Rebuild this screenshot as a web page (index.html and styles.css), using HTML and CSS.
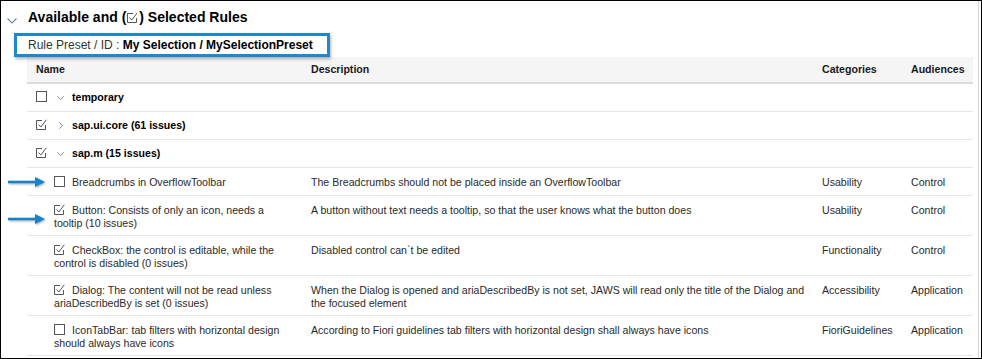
FILE: index.html
```html
<!DOCTYPE html>
<html lang="en">
<head>
    <meta charset="UTF-8">
    <meta name="viewport" content="width=device-width, initial-scale=1.0">
    <title>Available and Selected Rules</title>
    <link rel="stylesheet" href="styles.css">
</head>
<body>
    <div class="frame">
        <div class="panel">
            <div class="panel-title">
                <svg class="toggle" viewBox="0 0 10 6"><path d="M0.5 0.5L5 5L9.5 0.5" fill="none" stroke="#6a84a0" stroke-width="1.1"/></svg>
                <h2>Available and (<svg class="title-check" viewBox="0 0 11 11"><path d="M6 1.5H0.5V10.5H9.5V6" fill="none" stroke="#555"/><path d="M2.5 5.5L4.8 8L10.3 0.8" fill="none" stroke="#555"/></svg>) Selected Rules</h2>
            </div>
            <div class="preset">Rule Preset / ID : <b>My Selection / MySelectionPreset</b></div>
            <table class="rules">
                <colgroup>
                    <col class="col-name">
                    <col class="col-desc">
                    <col class="col-cat">
                    <col class="col-aud">
                </colgroup>
                <thead>
                    <tr><th>Name</th><th>Description</th><th>Categories</th><th>Audiences</th></tr>
                </thead>
                <tbody>
                    <tr class="group">
                        <td><span class="box"></span><svg class="chev" viewBox="0 0 7 4"><path d="M0.3 0.3L3.5 3.5L6.7 0.3" fill="none" stroke="#7d92a8"/></svg>temporary</td>
                        <td></td><td></td><td></td>
                    </tr>
                    <tr class="group">
                        <td><svg class="check" viewBox="0 0 11 11"><path d="M6 1.5H0.5V10.5H9.5V6" fill="none" stroke="#555"/><path d="M2.5 5.5L4.8 8L10.3 0.8" fill="none" stroke="#555"/></svg><svg class="chev chev-right" viewBox="0 0 4 7"><path d="M0.3 0.3L3.5 3.5L0.3 6.7" fill="none" stroke="#7d92a8"/></svg>sap.ui.core (61 issues)</td>
                        <td></td><td></td><td></td>
                    </tr>
                    <tr class="group">
                        <td><svg class="check" viewBox="0 0 11 11"><path d="M6 1.5H0.5V10.5H9.5V6" fill="none" stroke="#555"/><path d="M2.5 5.5L4.8 8L10.3 0.8" fill="none" stroke="#555"/></svg><svg class="chev" viewBox="0 0 7 4"><path d="M0.3 0.3L3.5 3.5L6.7 0.3" fill="none" stroke="#7d92a8"/></svg>sap.m (15 issues)</td>
                        <td></td><td></td><td></td>
                    </tr>
                    <tr class="rule">
                        <td><span class="box"></span>Breadcrumbs in OverflowToolbar</td>
                        <td>The Breadcrumbs should not be placed inside an OverflowToolbar</td>
                        <td>Usability</td>
                        <td>Control</td>
                    </tr>
                    <tr class="rule">
                        <td><svg class="check" viewBox="0 0 11 11"><path d="M6 1.5H0.5V10.5H9.5V6" fill="none" stroke="#555"/><path d="M2.5 5.5L4.8 8L10.3 0.8" fill="none" stroke="#555"/></svg>Button: Consists of only an icon, needs a tooltip (10 issues)</td>
                        <td>A button without text needs a tooltip, so that the user knows what the button does</td>
                        <td>Usability</td>
                        <td>Control</td>
                    </tr>
                    <tr class="rule">
                        <td><svg class="check" viewBox="0 0 11 11"><path d="M6 1.5H0.5V10.5H9.5V6" fill="none" stroke="#555"/><path d="M2.5 5.5L4.8 8L10.3 0.8" fill="none" stroke="#555"/></svg>CheckBox: the control is editable, while the control is disabled (0 issues)</td>
                        <td>Disabled control can`t be edited</td>
                        <td>Functionality</td>
                        <td>Control</td>
                    </tr>
                    <tr class="rule">
                        <td><svg class="check" viewBox="0 0 11 11"><path d="M6 1.5H0.5V10.5H9.5V6" fill="none" stroke="#555"/><path d="M2.5 5.5L4.8 8L10.3 0.8" fill="none" stroke="#555"/></svg>Dialog: The content will not be read unless ariaDescribedBy is set (0 issues)</td>
                        <td>When the Dialog is opened and ariaDescribedBy is not set, JAWS will read only the title of the Dialog and the focused element</td>
                        <td>Accessibility</td>
                        <td>Application</td>
                    </tr>
                    <tr class="rule">
                        <td><span class="box"></span>IconTabBar: tab filters with horizontal design should always have icons</td>
                        <td>According to Fiori guidelines tab filters with horizontal design shall always have icons</td>
                        <td>FioriGuidelines</td>
                        <td>Application</td>
                    </tr>
                </tbody>
            </table>
        </div>
        <svg class="pointer pointer-a" viewBox="0 0 38 12"><path d="M0 6H29" stroke="#1583cc" stroke-width="2.5"/><path d="M27 1L37 6L27 11Z" fill="#1583cc"/></svg>
        <svg class="pointer pointer-b" viewBox="0 0 38 12"><path d="M0 6H29" stroke="#1583cc" stroke-width="2.5"/><path d="M27 1L37 6L27 11Z" fill="#1583cc"/></svg>
    </div>
</body>
</html>
```

FILE: styles.css
```css
body {
    margin: 0;
    font-family: "Liberation Sans", Arial, sans-serif;
    color: #333;
}
div.frame {
    position: relative;
    width: 982px;
    height: 359px;
    box-sizing: border-box;
    border: 1px solid #000;
    overflow: hidden;
    background-color: #fff;
}
div.panel {
    width: 978px;
    height: 100%;
    box-sizing: border-box;
    border-right: 1px solid #d6d6d6;
}
div.panel-title {
    display: flex;
    align-items: flex-start;
    padding: 8px 0 0 6px;
}
svg.toggle {
    width: 10px;
    height: 6px;
    margin: 9px 11px 0 0;
}
div.panel-title h2 {
    margin: 0;
    font-size: 14px;
    line-height: 16px;
    font-weight: bold;
    color: #000;
}
svg.title-check {
    width: 11px;
    height: 11px;
    margin: 0 1px;
    vertical-align: -1px;
}
div.preset {
    position: relative;
    z-index: 1;
    margin: 8px 0 0 13px;
    width: 316px;
    height: 24px;
    box-sizing: border-box;
    border: 3px solid #1b88d0;
    padding-left: 11px;
    font-size: 12px;
    line-height: 18px;
    color: #333;
    background-color: #fff;
    box-shadow: 1px 2px 3px rgba(0, 0, 0, 0.3);
}
div.preset b {
    color: #000;
}
table.rules {
    margin-left: 26px;
    width: 946px;
    table-layout: fixed;
    border-collapse: collapse;
    font-size: 10.6px;
}
col.col-name {
    width: 275px;
}
col.col-desc {
    width: 511px;
}
col.col-cat {
    width: 89px;
}
col.col-aud {
    width: 71px;
}
table.rules th {
    padding: 6px 4px 6px 9px;
    line-height: 13px;
    text-align: left;
    font-weight: bold;
    color: #1a1a1a;
    background-color: #f5f5f5;
    border-bottom: 2px solid #dcdcdc;
}
table.rules tbody tr {
    height: 28px;
}
table.rules td {
    padding: 8px 4px 5px 9px;
    line-height: 13px;
    vertical-align: top;
    color: #2a2a2a;
    border-bottom: 1px solid #e6e6e6;
}
tr.group td {
    padding-top: 1px;
    padding-bottom: 0;
    vertical-align: middle;
    font-weight: bold;
    color: #000;
}
tr.rule td:first-child {
    padding-left: 27px;
    padding-right: 12px;
}
span.box {
    display: inline-block;
    width: 9px;
    height: 9px;
    border: 1px solid #555;
    vertical-align: -1px;
    margin-right: 7px;
}
svg.check {
    width: 11px;
    height: 11px;
    vertical-align: -1px;
    margin-right: 7px;
}
tr.group span.box,
tr.group svg.check {
    margin-right: 10px;
}
svg.chev {
    width: 7px;
    height: 4px;
    margin-right: 8px;
    vertical-align: 1px;
}
svg.chev-right {
    width: 4px;
    height: 7px;
    margin: 0 9px 0 2px;
    vertical-align: 0;
}
svg.pointer {
    position: absolute;
    left: 7px;
    width: 38px;
    height: 12px;
    filter: drop-shadow(1px 1px 1px rgba(0, 0, 0, 0.35));
}
svg.pointer-a {
    top: 175px;
}
svg.pointer-b {
    top: 212px;
}
```
